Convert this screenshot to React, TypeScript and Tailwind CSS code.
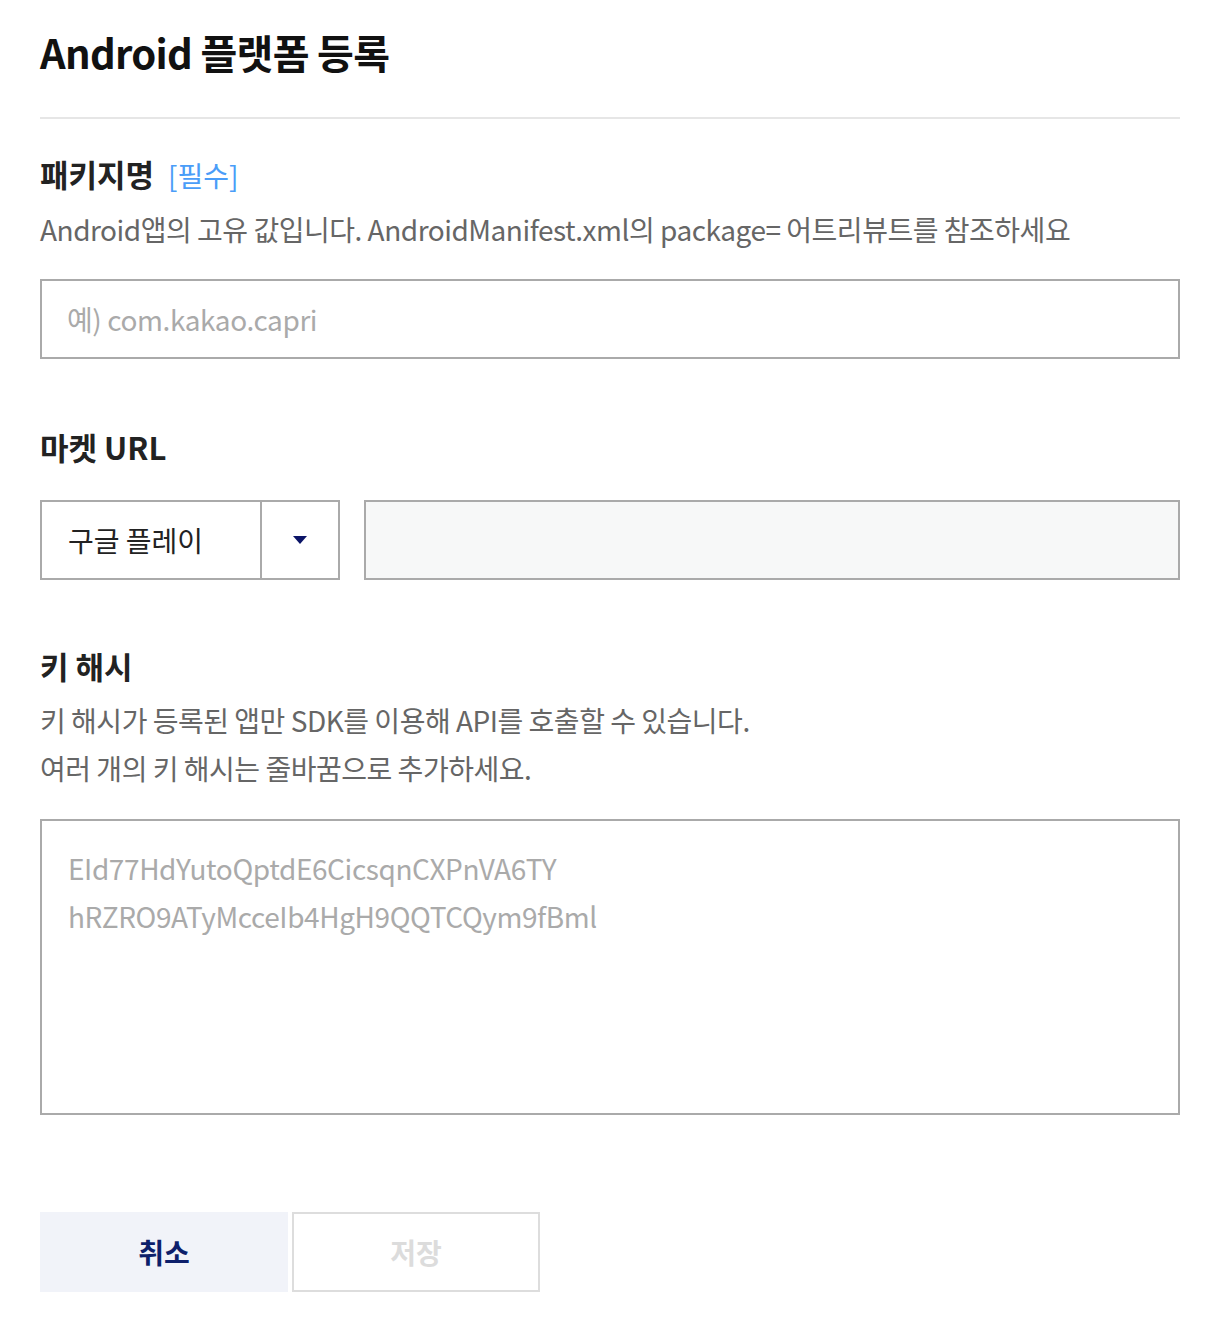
const font = { fontFamily: '"Noto Sans CJK KR", "Noto Sans", sans-serif' };

const Label = ({ children }: { children: React.ReactNode }) => (
  <h3 className="text-[31px] leading-[44px] font-bold text-[#222]">{children}</h3>
);

export default function App() {
  return (
    <div className="bg-white min-h-[1334px] px-10 pt-[22px]" style={font}>
      <div className="w-[1140px]">
        <h1 className="text-[40px] leading-[60px] font-bold text-[#111] tracking-[-0.7px]">
          Android 플랫폼 등록
        </h1>
        <div className="mt-[35px] h-[2px] bg-[#e6e6e6]" />

        {/* 패키지명 */}
        <div className="mt-[33px]">
          <div className="flex items-baseline gap-[14px]">
            <Label>패키지명</Label>
            <span className="text-[28px] leading-[44px] text-[#4a9df8]">[필수]</span>
          </div>
          <p className="mt-[8px] text-[28px] leading-[48px] text-[#666] tracking-[-0.48px]">
            Android앱의 고유 값입니다. AndroidManifest.xml의 package= 어트리뷰트를 참조하세요
          </p>
          <input
            className="mt-[26px] block w-full h-[80px] border-2 border-[#aaa] px-[25px] text-[28px] text-[#222] placeholder:text-[#aaa] outline-none tracking-[-0.4px]"
            placeholder="예) com.kakao.capri"
          />
        </div>

        {/* 마켓 URL */}
        <div className="mt-[66px]">
          <Label>마켓 URL</Label>
          <div className="mt-[31px] flex gap-6">
            <div className="flex w-[300px] h-[80px] border-2 border-[#aaa]">
              <div className="flex-1 flex items-center pl-[26px] text-[28px] text-[#222]">
                구글 플레이
              </div>
              <div className="w-[78px] border-l-2 border-[#aaa] flex items-center justify-center">
                <svg width="16" height="10" viewBox="0 0 16 10">
                  <path d="M1 1h14L8 9z" fill="#0b1467" />
                </svg>
              </div>
            </div>
            <div className="flex-1 h-[80px] border-2 border-[#aaa] bg-[#f7f8f8]" />
          </div>
        </div>

        {/* 키 해시 */}
        <div className="mt-[64px]">
          <Label>키 해시</Label>
          <p className="mt-[8px] text-[28px] leading-[48px] text-[#666] tracking-[-0.48px]">
            키 해시가 등록된 앱만 SDK를 이용해 API를 호출할 수 있습니다.
            <br />
            여러 개의 키 해시는 줄바꿈으로 추가하세요.
          </p>
          <textarea
            className="mt-[27px] block w-full h-[296px] border-2 border-[#aaa] px-[26px] pt-[23px] pb-[25px] text-[28px] leading-[48px] text-[#222] placeholder:text-[#aaa] outline-none resize-none tracking-[-0.4px]"
            placeholder={"EId77HdYutoQptdE6CicsqnCXPnVA6TY\nhRZRO9ATyMcceIb4HgH9QQTCQym9fBml"}
          />
        </div>

        <div className="mt-[97px] flex gap-1">
          <button className="w-[248px] h-[80px] bg-[#f1f3f9] text-[28px] font-bold text-[#0d1f6b]">
            취소
          </button>
          <button className="w-[248px] h-[80px] border-2 border-[#ddd] bg-white text-[28px] font-bold text-[#dcdcdc]">
            저장
          </button>
        </div>
      </div>
    </div>
  );
}
